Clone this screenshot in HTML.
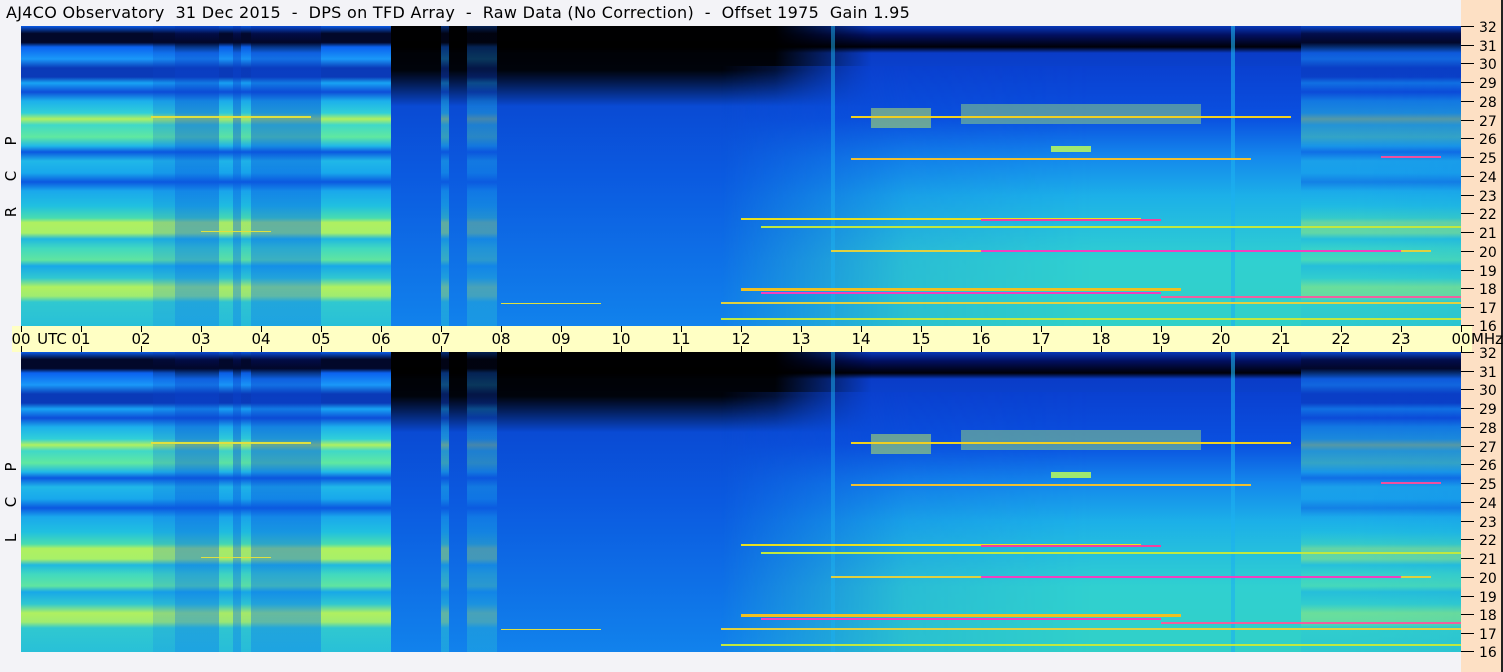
<!DOCTYPE html>
<html><head><meta charset="utf-8"><style>
html,body{margin:0;padding:0}
body{width:1503px;height:672px;background:#f3f3f7;position:relative;overflow:hidden;font-family:"DejaVu Sans","Liberation Sans",sans-serif;color:#000}
.title{position:absolute;left:6px;top:3px;font-size:16px;white-space:pre;letter-spacing:0.3px}
.peach{position:absolute;left:1461px;top:0;width:40px;height:672px;background:#fde0c4;border-right:2px solid #222}
.panel{position:absolute;left:21px;width:1440px;height:300px}
.strip{position:absolute;left:12px;top:326px;width:1460px;height:26px;background:#ffffc4}
</style></head><body>
<div class="title">AJ4CO Observatory  31 Dec 2015  -  DPS on TFD Array  -  Raw Data (No Correction)  -  Offset 1975  Gain 1.95</div>
<div class="peach"></div>

<svg width="0" height="0" style="position:absolute">
<defs>
<linearGradient id="base" x1="0" y1="0" x2="0" y2="1">
<stop offset="0" stop-color="#0838b8"/><stop offset="0.03" stop-color="#021060"/><stop offset="0.07" stop-color="#000008"/><stop offset="0.09" stop-color="#0a3cc8"/><stop offset="0.2" stop-color="#0a46d0"/><stop offset="0.5" stop-color="#0b5ae0"/><stop offset="1" stop-color="#1182ec"/>
</linearGradient>
<linearGradient id="band" x1="0" y1="0" x2="0" y2="1">
<stop offset="0" stop-color="#0a5ae8"/><stop offset="0.025" stop-color="#02082a"/><stop offset="0.055" stop-color="#02082a"/><stop offset="0.07" stop-color="#0b62f0"/><stop offset="0.11" stop-color="#1a98f8"/><stop offset="0.14" stop-color="#0a3ab8"/><stop offset="0.17" stop-color="#0a3ab8"/><stop offset="0.19" stop-color="#18a4f4"/><stop offset="0.22" stop-color="#0d4ed8"/><stop offset="0.25" stop-color="#1cb0ec"/><stop offset="0.29" stop-color="#30d0d8"/><stop offset="0.31" stop-color="#b0f060"/><stop offset="0.33" stop-color="#40d8c8"/><stop offset="0.37" stop-color="#60e8a0"/><stop offset="0.40" stop-color="#20b8e8"/><stop offset="0.42" stop-color="#0b58e0"/><stop offset="0.45" stop-color="#20b8e8"/><stop offset="0.49" stop-color="#18a8ec"/><stop offset="0.52" stop-color="#0b58e0"/><stop offset="0.55" stop-color="#1aa8ec"/><stop offset="0.6" stop-color="#20c0e0"/><stop offset="0.64" stop-color="#48dcb0"/><stop offset="0.655" stop-color="#b0f060"/><stop offset="0.69" stop-color="#a8f068"/><stop offset="0.71" stop-color="#20b8e0"/><stop offset="0.74" stop-color="#40d8c0"/><stop offset="0.78" stop-color="#60e4a0"/><stop offset="0.8" stop-color="#18a8e8"/><stop offset="0.84" stop-color="#30c8d0"/><stop offset="0.87" stop-color="#b0f060"/><stop offset="0.9" stop-color="#a0ec70"/><stop offset="0.92" stop-color="#30c8d0"/><stop offset="1" stop-color="#28c0d8"/>
</linearGradient>
<linearGradient id="right" x1="0" y1="0" x2="0" y2="1">
<stop offset="0" stop-color="#0a40d0"/><stop offset="0.2" stop-color="#0a50e0"/><stop offset="0.35" stop-color="#1488ec"/><stop offset="0.5" stop-color="#1cb0e8"/><stop offset="0.75" stop-color="#30d0d0"/><stop offset="1" stop-color="#30d0c8"/>
</linearGradient>
<linearGradient id="hfade" x1="0" y1="0" x2="1" y2="0">
<stop offset="0" stop-color="#fff" stop-opacity="0"/><stop offset="0.25" stop-color="#fff" stop-opacity="0.8"/><stop offset="0.5" stop-color="#fff" stop-opacity="1"/><stop offset="0.85" stop-color="#fff" stop-opacity="1"/><stop offset="1" stop-color="#fff" stop-opacity="0.9"/>
</linearGradient>
<mask id="rm"><rect x="700" y="0" width="740" height="300" fill="url(#hfade)"/></mask>
<linearGradient id="bh" x1="0" y1="0" x2="1" y2="0">
<stop offset="0" stop-color="#fff"/><stop offset="0.8" stop-color="#fff"/><stop offset="1" stop-color="#fff" stop-opacity="0"/>
</linearGradient>
<mask id="bm"><rect x="370" y="0" width="480" height="80" fill="url(#bh)"/></mask>
<linearGradient id="blk" x1="0" y1="0" x2="0" y2="1">
<stop offset="0" stop-color="#000" stop-opacity="1"/><stop offset="0.55" stop-color="#000" stop-opacity="0.95"/><stop offset="1" stop-color="#000" stop-opacity="0"/>
</linearGradient>
<g id="spec">
<rect x="0" y="0" width="1440" height="300" fill="url(#base)"/>
<rect x="370" y="0" width="480" height="80" fill="url(#blk)" mask="url(#bm)"/>
<rect x="700" y="40" width="740" height="260" fill="url(#right)" mask="url(#rm)"/>
<rect x="1280" y="0" width="160" height="300" fill="url(#band)" opacity="0.45"/>
<rect x="0" y="0" width="132" height="300" fill="url(#band)"/>
<rect x="132" y="0" width="22" height="300" fill="url(#band)" opacity="0.8"/>
<rect x="154" y="0" width="146" height="300" fill="url(#band)" opacity="0.55"/>
<rect x="198" y="0" width="14" height="300" fill="url(#band)" opacity="0.9"/>
<rect x="220" y="0" width="10" height="300" fill="url(#band)" opacity="0.85"/>
<rect x="300" y="0" width="70" height="300" fill="url(#band)"/>
<rect x="420" y="0" width="8" height="300" fill="url(#band)" opacity="0.5"/>
<rect x="446" y="0" width="30" height="300" fill="url(#band)" opacity="0.35"/>
<rect x="810" y="0" width="4" height="300" fill="#1cb0f0" opacity="0.5"/>
<rect x="1210" y="0" width="4" height="300" fill="#1cb0f0" opacity="0.6"/>
<rect x="850" y="82" width="60" height="20" fill="#b8e860" opacity="0.55"/>
<rect x="940" y="78" width="240" height="20" fill="#a8e870" opacity="0.45"/>
<rect x="830" y="90" width="440" height="2" fill="#f0d020"/>
<rect x="1030" y="120" width="40" height="6" fill="#a0e870"/>
<rect x="130" y="90" width="160" height="2" fill="#e0e040"/>
<rect x="830" y="132" width="400" height="2" fill="#f0c030"/>
<rect x="1360" y="130" width="60" height="2" fill="#f050a0"/>
<rect x="720" y="192" width="400" height="2" fill="#e8e020"/>
<rect x="960" y="193" width="180" height="2" fill="#f040a0"/>
<rect x="740" y="200" width="700" height="2" fill="#c0e840"/>
<rect x="180" y="205" width="70" height="1" fill="#e0e040"/>
<rect x="810" y="224" width="600" height="2" fill="#e0d040"/>
<rect x="960" y="224" width="420" height="2" fill="#f040c0"/>
<rect x="720" y="262" width="440" height="3" fill="#f0c020"/>
<rect x="740" y="266" width="400" height="2" fill="#f040c0"/>
<rect x="700" y="276" width="740" height="2" fill="#e0d040"/>
<rect x="1140" y="270" width="300" height="2" fill="#f060a0"/>
<rect x="700" y="292" width="740" height="2" fill="#c0e840"/>
<rect x="480" y="277" width="100" height="1" fill="#e0e040"/>
</g>
</defs></svg>

<svg class="panel" style="top:26px" viewBox="0 0 1440 300"><use href="#spec"/></svg>
<svg class="panel" style="top:352px" viewBox="0 0 1440 300"><use href="#spec"/></svg>

<div class="strip"></div>
<svg style="position:absolute;left:0;top:326px" width="1503" height="26">
<g stroke="#000" stroke-width="1">
<path d="M21.5 0v6M21.5 20v6M81.5 0v6M81.5 20v6M141.5 0v6M141.5 20v6M201.5 0v6M201.5 20v6M261.5 0v6M261.5 20v6M321.5 0v6M321.5 20v6M381.5 0v6M381.5 20v6M441.5 0v6M441.5 20v6M501.5 0v6M501.5 20v6M561.5 0v6M561.5 20v6M621.5 0v6M621.5 20v6M681.5 0v6M681.5 20v6M741.5 0v6M741.5 20v6M801.5 0v6M801.5 20v6M861.5 0v6M861.5 20v6M921.5 0v6M921.5 20v6M981.5 0v6M981.5 20v6M1041.5 0v6M1041.5 20v6M1101.5 0v6M1101.5 20v6M1161.5 0v6M1161.5 20v6M1221.5 0v6M1221.5 20v6M1281.5 0v6M1281.5 20v6M1341.5 0v6M1341.5 20v6M1401.5 0v6M1401.5 20v6M1461.5 0v6M1461.5 20v6"/>
</g>
<g font-family="DejaVu Sans, Liberation Sans, sans-serif" font-size="15" text-anchor="middle">
<text x="21" y="18">00</text><text x="52" y="18">UTC</text><text x="81" y="18">01</text>
<text x="141" y="18">02</text><text x="201" y="18">03</text><text x="261" y="18">04</text><text x="321" y="18">05</text><text x="381" y="18">06</text><text x="441" y="18">07</text><text x="501" y="18">08</text><text x="561" y="18">09</text><text x="621" y="18">10</text><text x="681" y="18">11</text><text x="741" y="18">12</text><text x="801" y="18">13</text><text x="861" y="18">14</text><text x="921" y="18">15</text><text x="981" y="18">16</text><text x="1041" y="18">17</text><text x="1101" y="18">18</text><text x="1161" y="18">19</text><text x="1221" y="18">20</text><text x="1281" y="18">21</text><text x="1341" y="18">22</text><text x="1401" y="18">23</text><text x="1461" y="18">00</text>
<text x="1487" y="18">MHz</text>
</g>
</svg>

<svg style="position:absolute;left:1461px;top:0" width="40" height="672">
<g stroke="#000"><path d="M0 26.5h13M0 45.5h13M0 63.5h13M0 82.5h13M0 101.5h13M0 120.5h13M0 138.5h13M0 157.5h13M0 176.5h13M0 195.5h13M0 213.5h13M0 232.5h13M0 251.5h13M0 270.5h13M0 288.5h13M0 307.5h13M0 325.5h13"/>
<path d="M0 352.5h13M0 371.5h13M0 389.5h13M0 408.5h13M0 427.5h13M0 446.5h13M0 464.5h13M0 483.5h13M0 502.5h13M0 521.5h13M0 539.5h13M0 558.5h13M0 577.5h13M0 596.5h13M0 614.5h13M0 633.5h13M0 651.5h13"/></g>
<g font-family="DejaVu Sans, Liberation Sans, sans-serif" font-size="14">
<text x="18" y="32">32</text><text x="18" y="51">31</text><text x="18" y="69">30</text><text x="18" y="88">29</text><text x="18" y="107">28</text><text x="18" y="126">27</text><text x="18" y="144">26</text><text x="18" y="163">25</text><text x="18" y="182">24</text><text x="18" y="201">23</text><text x="18" y="219">22</text><text x="18" y="238">21</text><text x="18" y="257">20</text><text x="18" y="276">19</text><text x="18" y="294">18</text><text x="18" y="313">17</text><text x="18" y="331">16</text>
<text x="18" y="358">32</text><text x="18" y="377">31</text><text x="18" y="395">30</text><text x="18" y="414">29</text><text x="18" y="433">28</text><text x="18" y="452">27</text><text x="18" y="470">26</text><text x="18" y="489">25</text><text x="18" y="508">24</text><text x="18" y="527">23</text><text x="18" y="545">22</text><text x="18" y="564">21</text><text x="18" y="583">20</text><text x="18" y="602">19</text><text x="18" y="620">18</text><text x="18" y="639">17</text><text x="18" y="657">16</text>
</g>
</svg>

<svg style="position:absolute;left:0;top:0" width="21" height="672">
<g font-family="DejaVu Sans, Liberation Sans, sans-serif" font-size="15" text-anchor="middle">
<text transform="translate(16,141) rotate(-90)">P</text>
<text transform="translate(16,176) rotate(-90)">C</text>
<text transform="translate(16,212) rotate(-90)">R</text>
<text transform="translate(16,467) rotate(-90)">P</text>
<text transform="translate(16,502) rotate(-90)">C</text>
<text transform="translate(16,538) rotate(-90)">L</text>
</g>
</svg>
</body></html>
